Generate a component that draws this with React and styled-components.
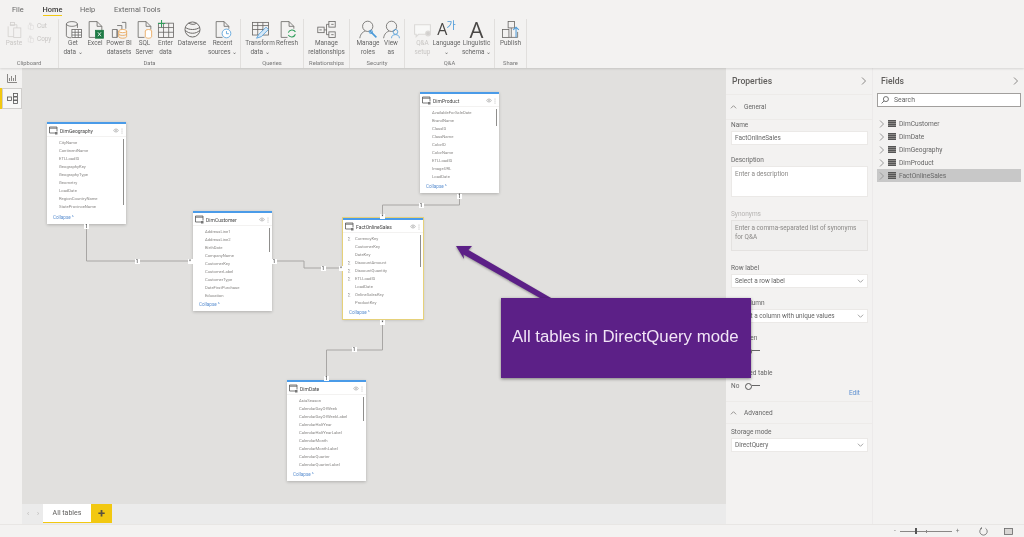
import React from "react";
import styled, { createGlobalStyle } from "styled-components";

const GlobalStyle = createGlobalStyle`
  html, body { margin: 0; padding: 0; background: #f3f2f1; overflow: hidden; }
  * { box-sizing: border-box; }
`;

const GREY = "#666462";
const BLUE = "#4b9ad8";
const ORANGE = "#e8a04c";

const icons = {
  paste: (
    <g stroke="#d2d0ce" fill="none">
      <path d="M6 6h9v4M4 8v13h7" /><rect x="11" y="10" width="9" height="12" /><rect x="7" y="3" width="5" height="4" />
    </g>
  ),
  getData: (
    <g stroke={GREY} fill="none">
      <ellipse cx="10" cy="5" rx="7" ry="3" /><path d="M3 5v15c0 1.500 3 2.500 6 2.500M17 5v5" />
      <rect x="10" y="12" width="12" height="10" fill="#fff" /><path d="M10 15.500h12M10 19h12M14 12v10M18 12v10" />
    </g>
  ),
  excel: (
    <g fill="none" stroke={GREY}>
      <path d="M4 2h10l6 6v6M4 2v20h8M14 2v6h6" />
      <rect x="12" y="13" width="10" height="10" fill="#1e7a45" stroke="#1e7a45" />
      <path d="M15 15.500l4 5M19 15.500l-4 5" stroke="#fff" />
    </g>
  ),
  dataset: (
    <g fill="none" stroke={GREY}>
      <path d="M3 12h6v10H3zM9 7h6v5M15 3h5v8" />
      <path d="M9 12v10" />
      <ellipse cx="16" cy="14" rx="5" ry="2" stroke={ORANGE} fill="#fff" />
      <path d="M11 14v7c0 1 2 2 5 2s5-1 5-2v-7M11 17.500c0 1 2 2 5 2s5-1 5-2" stroke={ORANGE} />
    </g>
  ),
  sql: (
    <g fill="none" stroke={GREY}>
      <path d="M4 2h10l6 6v4M4 2v20h8M14 2v6h6" />
      <ellipse cx="17" cy="14" rx="4" ry="2" stroke={ORANGE} fill="#fff" />
      <path d="M13 14v7c0 1 2 2 4 2s4-1 4-2v-7" stroke={ORANGE} fill="#fff" />
    </g>
  ),
  enter: (
    <g fill="none" stroke={GREY}>
      <rect x="3" y="4" width="19" height="18" /><path d="M3 9.500h19M3 15.500h19M9.500 4v18M16 4v18" />
      <path d="M7 0v9M2.500 4.500h9" stroke="#2f9e5b" strokeWidth="1.300" />
    </g>
  ),
  dataverse: (
    <g fill="none" stroke={GREY} strokeWidth="1.200">
      <circle cx="12" cy="12" r="9.500" /><path d="M3 9c3 4 15 4 18 0M3 13c4 5 14 5 18 0M7 4c4 2 8 2 10 0" />
    </g>
  ),
  recent: (
    <g fill="none" stroke={GREY}>
      <path d="M4 2h10l6 6v3M4 2v20h8M14 2v6h6" />
      <circle cx="17" cy="17" r="5.500" stroke={BLUE} fill="#fff" /><path d="M17 14v3.300h3" stroke={BLUE} />
    </g>
  ),
  transform: (
    <g fill="none" stroke={GREY}>
      <rect x="2" y="3" width="20" height="16" /><path d="M2 7h20M2 12h20M8.500 3v16M15 3v16" />
      <path d="M7 23l3-5 9-9 3 3-9 9z" stroke={BLUE} fill="#d5e8f7" />
    </g>
  ),
  refresh: (
    <g fill="none" stroke={GREY}>
      <path d="M4 2h10l6 6v3M4 2v20h8M14 2v6h6" />
      <path d="M13 16a5 5 0 0 1 9-1M22 18a5 5 0 0 1-9 1" stroke="#2f9e5b" strokeWidth="1.300" />
    </g>
  ),
  relationships: (
    <g fill="none" stroke={GREY}>
      <rect x="1" y="9" width="8" height="7" /><rect x="15" y="2" width="8" height="7" /><rect x="15" y="15" width="8" height="7" />
      <path d="M9 12.500h3M12 5.500v13M12 5.500h3M12 18.500h3M3 12.500h3M18 5.500h3M18 18.500h3" />
    </g>
  ),
  roles: (
    <g fill="none" stroke={GREY}>
      <circle cx="11" cy="8" r="6.500" /><path d="M1 23c1-6 4-8 7-9" />
      <path d="M14 14l8 8" stroke={BLUE} strokeWidth="2" /><circle cx="15" cy="15" r="2.200" stroke={BLUE} />
    </g>
  ),
  viewAs: (
    <g fill="none" stroke={GREY}>
      <circle cx="12" cy="8" r="6.500" /><path d="M2 23c1-6 4-8 7-9" />
      <circle cx="17" cy="15" r="3" stroke={BLUE} /><path d="M12 23c0-3 2-4.500 5-4.500s5 1.500 5 4.500" stroke={BLUE} />
    </g>
  ),
  qna: (
    <g fill="none" stroke="#dcdad8" strokeWidth="1.400">
      <path d="M2 6h20v12H7l-3 3v-3H2z" fill="#f8f8f7" /><circle cx="19" cy="17" r="3" fill="#d2d0ce" />
    </g>
  ),
  publish: (
    <g fill="none" stroke={GREY}>
      <rect x="9" y="2" width="8" height="8" /><rect x="2" y="12" width="8" height="10" /><path d="M10 22h11v-7M13 10v12" />
      <path d="M19 22V9M15.500 12.500L19 9l3.500 3.500" stroke={BLUE} strokeWidth="1.300" />
    </g>
  ),
};

const Svg = ({ name, size = 19 }) => (
  <svg width={size} height={size} viewBox="0 0 24 24" strokeWidth="1">
    {icons[name]}
  </svg>
);

const Page = styled.div`
  position: relative;
  width: 1024px;
  height: 537px;
  display: flex;
  flex-direction: column;
  overflow: hidden;
  background: #f3f2f1;
  font-family: Roboto, "Liberation Sans", sans-serif;
  color: #605e5c;
  filter: blur(0.45px);
`;

const Ribbon = styled.header`
  height: 68px;
  flex: none;
  position: relative;
  z-index: 2;
  background: #f3f2f1;
  box-shadow: 0 1px 2px rgba(0, 0, 0, 0.12);
`;

const RibbonTabs = styled.nav`
  height: 19px;
  display: flex;
  align-items: center;
  padding-left: 12px;
  font-size: 7.400px;
`;

const RibbonTab = styled.span`
  margin-right: ${(p) => p.$gap}px;
  padding: 2px 0 1px;
  color: ${(p) => (p.$active ? "#3b3a39" : "#666")};
  font-weight: ${(p) => (p.$active ? 500 : 400)};
  border-bottom: 1px solid ${(p) => (p.$active ? "#f2c811" : "transparent")};
`;

const Groups = styled.div`
  display: flex;
  height: 49px;
`;

const Group = styled.section`
  width: ${(p) => p.$w}px;
  flex: none;
  display: flex;
  flex-direction: column;
  border-right: 1px solid #e1dfdd;
`;

const GroupButtons = styled.div`
  flex: 1;
  display: flex;
  padding-left: ${(p) => p.$pad || 0}px;
`;

const GroupLabel = styled.div`
  height: 9px;
  line-height: 9px;
  text-align: center;
  font-size: 5.800px;
  color: #777;
`;

const Tool = styled.div`
  width: ${(p) => p.$w}px;
  flex: none;
  display: flex;
  flex-direction: column;
  align-items: center;
  font-size: 6.400px;
  line-height: 8.600px;
  text-align: center;
  white-space: nowrap;
  color: ${(p) => (p.$off ? "#c8c6c4" : "#666")};
`;

const ToolIcon = styled.div`
  height: 20px;
  display: flex;
  align-items: center;
  justify-content: center;
`;

const BigLetter = styled.span`
  font-size: ${(p) => p.$size}px;
  line-height: 20px;
  color: #4a4846;
  font-family: "Open Sans", sans-serif;
`;

const Hangul = styled.span`
  font-size: 10px;
  line-height: 14px;
  color: ${BLUE};
  margin: -8px 0 0 -1px;
  font-family: "Noto Sans CJK KR", sans-serif;
`;

const SmallTools = styled.div`
  display: flex;
  flex-direction: column;
  gap: 5px;
  padding: 3px 0 0 0;
  font-size: 6.400px;
  color: #c8c6c4;
`;

const SmallTool = styled.span`
  display: flex;
  align-items: center;
  gap: 2px;
`;

const Main = styled.div`
  flex: 1;
  display: flex;
  min-height: 0;
`;

const Rail = styled.aside`
  width: 22px;
  flex: none;
  display: flex;
  flex-direction: column;
  background: #f3f2f1;
`;

const RailItem = styled.div`
  height: ${(p) => (p.$active ? 21 : 20)}px;
  display: flex;
  align-items: center;
  justify-content: center;
  border-left: 2px solid ${(p) => (p.$active ? "#f2c811" : "transparent")};
  background: ${(p) => (p.$active ? "#f8f8f7" : "transparent")};
  box-shadow: ${(p) => (p.$active ? "inset 0 0 0 1px #d0cecc" : "none")};
`;

const Center = styled.div`
  width: 704px;
  flex: none;
  display: flex;
  flex-direction: column;
`;

const Canvas = styled.main`
  position: relative;
  flex: 1;
  background: #e1e0de;
`;

const Lines = styled.svg`
  position: absolute;
  inset: 0;
  width: 100%;
  height: 100%;
`;

const Marker = styled.span`
  position: absolute;
  left: ${(p) => p.$x - 2.5}px;
  top: ${(p) => p.$y - 2.5}px;
  width: 5px;
  height: 5px;
  background: #fff;
  font-size: 4.500px;
  line-height: 5px;
  text-align: center;
  color: #333;
  font-weight: 500;
`;

const Card = styled.article`
  position: absolute;
  left: ${(p) => p.$x}px;
  top: ${(p) => p.$y}px;
  width: ${(p) => (p.$selected ? 80 : 79)}px;
  height: ${(p) => p.$h}px;
  background: #fff;
  border-top: 2px solid #4a9be8;
  box-shadow: ${(p) =>
    p.$selected ? "0 0 0 1px #e6d17a, 0 1px 3px rgba(0,0,0,.2)" : "0 1px 3px rgba(0,0,0,.22)"};
  display: flex;
  flex-direction: column;
`;

const CardHead = styled.div`
  height: 12px;
  flex: none;
  display: flex;
  align-items: center;
  padding: 1px 3px 0 2px;
  gap: 2px;
  font-size: 5px;
  color: #444;
  box-shadow: 0 1px 0 #f3f2f1;
`;

const CardName = styled.span`
  flex: 1;
  white-space: nowrap;
`;

const FieldList = styled.div`
  position: relative;
  flex: 1;
  padding: 3px 0 0 12px;
  overflow: hidden;
`;

const Field = styled.div`
  position: relative;
  height: 8.050px;
  line-height: 8px;
  font-size: 4.200px;
  color: #8a8886;
  white-space: nowrap;
`;

const Sigma = styled.span`
  position: absolute;
  left: -7px;
  top: 0;
  color: #777;
`;

const Thumb = styled.div`
  position: absolute;
  right: 2px;
  top: 3px;
  width: 1.500px;
  height: ${(p) => p.$h}px;
  background: #8f8e8c;
`;

const Collapse = styled.div`
  height: 11px;
  flex: none;
  padding-left: 6px;
  font-size: 4.600px;
  line-height: 10px;
  color: #5b8fd0;
`;

const TabBar = styled.div`
  height: 20px;
  flex: none;
  display: flex;
  background: #ebebeb;
  padding-left: 5px;
  color: #b5b3b1;
  font-size: 8px;
`;

const TabArrows = styled.div`
  width: 16px;
  display: flex;
  gap: 8px;
  align-items: center;
  font-size: 7px;
`;

const PageTab = styled.div`
  width: 48px;
  height: 19px;
  display: flex;
  align-items: center;
  justify-content: center;
  background: #fff;
  color: #5f5e5c;
  font-size: 7px;
  border-bottom: 1px solid #f2c811;
`;

const AddTab = styled.div`
  width: 21px;
  height: 19px;
  display: flex;
  align-items: center;
  justify-content: center;
  background: #f2c811;
  color: #5a5340;
  font-size: 13px;
  font-weight: 700;
`;

const Properties = styled.aside`
  width: 147px;
  flex: none;
  border-right: 1px solid #eceaea;
  background: #f3f2f1;
`;

const PanelHead = styled.div`
  height: 26px;
  display: flex;
  align-items: center;
  justify-content: space-between;
  padding: 0 5px 0 ${(p) => p.$pad}px;
  font-size: 8.600px;
  font-weight: 500;
  color: #605e5c;
`;

const Chevron = styled.svg`
  width: 7px;
  height: 8px;
  fill: none;
  stroke: ${(p) => p.$color || "#8a8886"};
  flex: none;
`;

const Section = styled.div`
  height: ${(p) => p.$h}px;
  display: flex;
  align-items: center;
  gap: 7px;
  padding-left: 4px;
  font-size: 6.500px;
  border-top: 1px solid #edebe9;
  border-bottom: 1px solid #edebe9;
  color: #666;
`;

const PropBody = styled.div`
  padding: 0 4px 0 5px;
`;

const Label = styled.div`
  font-size: 6.500px;
  line-height: 9px;
  margin: ${(p) => p.$top + 1}px 0 1px;
  color: ${(p) => (p.$off ? "#b5b3b1" : "#666")};
`;

const Input = styled.div`
  height: ${(p) => p.$h || 14}px;
  padding: ${(p) => (p.$h ? "3px 3px" : "0 3px")};
  display: flex;
  align-items: ${(p) => (p.$h ? "flex-start" : "center")};
  justify-content: space-between;
  background: ${(p) => (p.$off ? "#f0efee" : "#fff")};
  border: 1px solid ${(p) => (p.$off ? "#e4e2e0" : "#ebe9e7")};
  font-size: 6.400px;
  line-height: 9px;
  color: ${(p) => (p.$muted ? "#8a8886" : "#666")};
`;

const Switch = styled.div`
  display: flex;
  align-items: center;
  gap: 6px;
  height: 9px;
  margin-top: 3.500px;
  font-size: 6.500px;
  color: #666;
`;

const Knob = styled.span`
  width: 7px;
  height: 7px;
  border-radius: 50%;
  border: 1.500px solid #555;
  position: relative;
  &::after {
    content: "";
    position: absolute;
    left: 5.500px;
    top: 1.300px;
    width: 8px;
    height: 1px;
    background: #666;
  }
`;

const EditLink = styled.div`
  text-align: right;
  padding-right: 8px;
  margin-top: -2px;
  height: 12.500px;
  line-height: 9px;
  font-size: 6.500px;
  color: #5b8fd0;
`;

const Fields = styled.aside`
  width: 151px;
  flex: none;
  background: #f3f2f1;
`;

const SearchBox = styled.div`
  margin: -1px 3px 0 4px;
  height: 14px;
  display: flex;
  align-items: center;
  gap: 5px;
  padding-left: 3px;
  background: #fff;
  border: 1px solid #a19f9d;
  font-size: 6.800px;
  color: #666;
`;

const TableList = styled.div`
  margin: 10px 3px 0 4px;
`;

const TableRow = styled.div`
  height: 13px;
  display: flex;
  align-items: center;
  gap: 3px;
  padding-left: 1px;
  font-size: 6.600px;
  color: #666;
  background: ${(p) => (p.$selected ? "#c8c8c8" : "transparent")};
`;

const GridGlyph = styled.span`
  width: 8px;
  height: 7px;
  background: repeating-linear-gradient(180deg, #555 0 1px, #8a8886 1px 2px);
  flex: none;
`;

const StatusBar = styled.footer`
  height: 13px;
  flex: none;
  display: flex;
  align-items: center;
  padding-left: 894px;
  border-top: 1px solid #e8e6e4;
  background: #f3f2f1;
  color: #777;
  font-size: 6.500px;
`;

const Zoom = styled.div`
  position: relative;
  width: 52px;
  height: 1px;
  margin: 0 4px;
  background: #8a8886;
  &::before {
    content: "";
    position: absolute;
    left: 15px;
    top: -2.500px;
    width: 2px;
    height: 6px;
    background: #555;
  }
  &::after {
    content: "";
    position: absolute;
    left: 26px;
    top: -1px;
    width: 1px;
    height: 3px;
    background: #8a8886;
  }
`;

const StatusIcons = styled.div`
  display: flex;
  gap: 16px;
  align-items: center;
  margin-left: 19px;
`;

const Callout = styled.div`
  position: absolute;
  left: 501px;
  top: 298px;
  width: 250px;
  height: 80px;
  z-index: 3;
  display: flex;
  align-items: center;
  padding: 0 0 2px 11px;
  background: #5c2087;
  box-shadow: 0 1px 3px rgba(0, 0, 0, 0.45);
  font-family: "Liberation Sans", Arial, sans-serif;
  font-size: 16.800px;
  color: #f1e4f6;
  white-space: nowrap;
`;

const Arrow = styled.svg`
  position: absolute;
  left: 450px;
  top: 240px;
  width: 125px;
  height: 65px;
  z-index: 3;
  filter: drop-shadow(0 1px 1px rgba(0, 0, 0, 0.35));
`;

const ChevronRight = ({ color }) => (
  <Chevron viewBox="0 0 7 8" $color={color}><path d="M2 .5L5.500 4 2 7.500" /></Chevron>
);
const ChevronDown = () => (
  <Chevron viewBox="0 0 8 8" $color="#999"><path d="M1 2.500l3 3 3-3" /></Chevron>
);
const ChevronUp = () => (
  <Chevron viewBox="0 0 8 8"><path d="M1 5.500l3-3 3 3" /></Chevron>
);

const TableGlyph = () => (
  <svg width="9" height="9" viewBox="0 0 9 9" fill="none" stroke="#555" strokeWidth=".8">
    <path d="M6 7H.5V1h7.500v4.500" /><path d="M.5 2.200H8" /><rect x="6" y="6" width="2.500" height="2.500" fill="#777" stroke="none" />
  </svg>
);

const Eye = () => (
  <svg width="6" height="5" viewBox="0 0 6 5" fill="none" stroke="#aaa" strokeWidth=".7">
    <path d="M.3 2.500C2 .5 4 .5 5.700 2.500 4 4.500 2 4.500.3 2.500z" /><circle cx="3" cy="2.500" r=".8" />
  </svg>
);

const Dots = () => (
  <svg width="2" height="6" viewBox="0 0 2 6" fill="#aaa">
    <circle cx="1" cy="1" r=".5" /><circle cx="1" cy="3" r=".5" /><circle cx="1" cy="5" r=".5" />
  </svg>
);

// canvas coordinates: the diagram is a free canvas, x-22 / y-68 from the page
const tables = [
  { name: "DimGeography", x: 25, y: 54, h: 102, thumb: 66,
    fields: ["CityName", "ContinentName", "ETLLoadID", "GeographyKey", "GeographyType", "Geometry", "LoadDate", "RegionCountryName", "StateProvinceName"] },
  { name: "DimCustomer", x: 171, y: 143, h: 100, thumb: 24,
    fields: ["AddressLine1", "AddressLine2", "BirthDate", "CompanyName", "CustomerKey", "CustomerLabel", "CustomerType", "DateFirstPurchase", "Education"] },
  { name: "DimProduct", x: 398, y: 24, h: 101, thumb: 17,
    fields: ["AvailableForSaleDate", "BrandName", "ClassID", "ClassName", "ColorID", "ColorName", "ETLLoadID", "ImageURL", "LoadDate"] },
  { name: "FactOnlineSales", x: 321, y: 150, h: 101, thumb: 32, selected: true,
    fields: ["∑CurrencyKey", "CustomerKey", "DateKey", "∑DiscountAmount", "∑DiscountQuantity", "∑ETLLoadID", "LoadDate", "∑OnlineSalesKey", "ProductKey"] },
  { name: "DimDate", x: 265, y: 312, h: 101, thumb: 24,
    fields: ["AsiaSeason", "CalendarDayOfWeek", "CalendarDayOfWeekLabel", "CalendarHalfYear", "CalendarHalfYearLabel", "CalendarMonth", "CalendarMonthLabel", "CalendarQuarter", "CalendarQuarterLabel"] },
];

const lines = [
  "M64.500 156V193H171",
  "M250 193H282V200H321",
  "M437.500 125V137H360.500V150",
  "M360.500 252V282H304.500V312",
];

const markers = [
  [64.5, 158, "1"], [115, 193, "1"], [168, 193, "*"], [252, 193, "1"], [301, 200, "1"], [319, 200, "*"],
  [437.5, 128, "1"], [399, 137, "1"], [360.5, 148, "*"], [360.5, 254, "*"], [332, 281, "1"], [304.5, 310, "1"],
];

const App = () => (
  <Page>
    <GlobalStyle />
    <Ribbon>
      <RibbonTabs>
        <RibbonTab $gap={19}>File</RibbonTab>
        <RibbonTab $gap={17.5} $active>Home</RibbonTab>
        <RibbonTab $gap={19}>Help</RibbonTab>
        <RibbonTab $gap={0}>External Tools</RibbonTab>
      </RibbonTabs>
      <Groups>
        <Group $w={59}>
          <GroupButtons $pad={1}>
            <Tool $w={26} $off><ToolIcon><Svg name="paste" /></ToolIcon>Paste</Tool>
            <SmallTools>
              <SmallTool><Svg name="paste" size={8} />Cut</SmallTool>
              <SmallTool><Svg name="paste" size={8} />Copy</SmallTool>
            </SmallTools>
          </GroupButtons>
          <GroupLabel>Clipboard</GroupLabel>
        </Group>
        <Group $w={182}>
          <GroupButtons $pad={2}>
            <Tool $w={24}><ToolIcon><Svg name="getData" /></ToolIcon>Get<br />data ⌄</Tool>
            <Tool $w={20}><ToolIcon><Svg name="excel" /></ToolIcon>Excel</Tool>
            <Tool $w={28}><ToolIcon><Svg name="dataset" /></ToolIcon>Power BI<br />datasets</Tool>
            <Tool $w={23}><ToolIcon><Svg name="sql" /></ToolIcon>SQL<br />Server</Tool>
            <Tool $w={19}><ToolIcon><Svg name="enter" /></ToolIcon>Enter<br />data</Tool>
            <Tool $w={34}><ToolIcon><Svg name="dataverse" /></ToolIcon>Dataverse</Tool>
            <Tool $w={27}><ToolIcon><Svg name="recent" /></ToolIcon>Recent<br />sources ⌄</Tool>
          </GroupButtons>
          <GroupLabel>Data</GroupLabel>
        </Group>
        <Group $w={63}>
          <GroupButtons $pad={4}>
            <Tool $w={30}><ToolIcon><Svg name="transform" /></ToolIcon>Transform<br />data ⌄</Tool>
            <Tool $w={24}><ToolIcon><Svg name="refresh" /></ToolIcon>Refresh</Tool>
          </GroupButtons>
          <GroupLabel>Queries</GroupLabel>
        </Group>
        <Group $w={46}>
          <GroupButtons>
            <Tool $w={45}><ToolIcon><Svg name="relationships" /></ToolIcon>Manage<br />relationships</Tool>
          </GroupButtons>
          <GroupLabel>Relationships</GroupLabel>
        </Group>
        <Group $w={55}>
          <GroupButtons $pad={6}>
            <Tool $w={24}><ToolIcon><Svg name="roles" /></ToolIcon>Manage<br />roles</Tool>
            <Tool $w={22}><ToolIcon><Svg name="viewAs" /></ToolIcon>View<br />as</Tool>
          </GroupButtons>
          <GroupLabel>Security</GroupLabel>
        </Group>
        <Group $w={90}>
          <GroupButtons $pad={6}>
            <Tool $w={23} $off><ToolIcon><Svg name="qna" /></ToolIcon>Q&amp;A<br />setup</Tool>
            <Tool $w={25}><ToolIcon><BigLetter $size={16}>A</BigLetter><Hangul>가</Hangul></ToolIcon>Language<br />⌄</Tool>
            <Tool $w={35}><ToolIcon><BigLetter $size={22}>A</BigLetter></ToolIcon>Linguistic<br />schema ⌄</Tool>
          </GroupButtons>
          <GroupLabel>Q&amp;A</GroupLabel>
        </Group>
        <Group $w={32}>
          <GroupButtons>
            <Tool $w={31}><ToolIcon><Svg name="publish" /></ToolIcon>Publish</Tool>
          </GroupButtons>
          <GroupLabel>Share</GroupLabel>
        </Group>
      </Groups>
    </Ribbon>
    <Main>
      <Rail>
        <RailItem>
          <svg width="10" height="10" viewBox="0 0 10 10" fill="none" stroke="#8a8886">
            <path d="M.5 1v8.500H10M2.500 8V5M4.500 8V3M6.500 8V5M8.500 8V2" />
          </svg>
        </RailItem>
        <RailItem $active>
          <svg width="11" height="11" viewBox="0 0 11 11" fill="none" stroke="#555" strokeWidth=".8">
            <rect x=".5" y="4" width="4" height="3.500" /><rect x="6.500" y=".5" width="4" height="3" /><rect x="6.500" y="4" width="4" height="3" /><rect x="6.500" y="7.500" width="4" height="3" />
          </svg>
        </RailItem>
      </Rail>
      <Center>
        <Canvas>
          <Lines>
            {lines.map((d) => (
              <path key={d} d={d} fill="none" stroke="#a8a6a4" strokeWidth="1" />
            ))}
          </Lines>
          {tables.map((t) => (
            <Card key={t.name} $x={t.x} $y={t.y} $h={t.h} $selected={t.selected}>
              <CardHead>
                <TableGlyph />
                <CardName>{t.name}</CardName>
                <Eye />
                <Dots />
              </CardHead>
              <FieldList>
                {t.fields.map((f) => (
                  <Field key={f}>
                    {f[0] === "∑" && <Sigma>∑</Sigma>}
                    {f.replace("∑", "")}
                  </Field>
                ))}
                <Thumb $h={t.thumb} />
              </FieldList>
              <Collapse>Collapse ^</Collapse>
            </Card>
          ))}
          {markers.map(([x, y, c], i) => (
            <Marker key={i} $x={x} $y={y}>{c}</Marker>
          ))}
        </Canvas>
        <TabBar>
          <TabArrows><span>‹</span><span>›</span></TabArrows>
          <PageTab>All tables</PageTab>
          <AddTab>+</AddTab>
        </TabBar>
      </Center>
      <Properties>
        <PanelHead $pad={6}>Properties<ChevronRight /></PanelHead>
        <Section $h={26}><ChevronUp />General</Section>
        <PropBody>
          <Label $top={0}>Name</Label>
          <Input>FactOnlineSales</Input>
          <Label $top={10}>Description</Label>
          <Input $h={31} $muted>Enter a description</Input>
          <Label $top={12} $off>Synonyms</Label>
          <Input $h={31} $off $muted>Enter a comma-separated list of synonyms for Q&amp;A</Input>
          <Label $top={12}>Row label</Label>
          <Input>Select a row label<ChevronDown /></Input>
          <Label $top={10}>Key column</Label>
          <Input>Select a column with unique values<ChevronDown /></Input>
          <Label $top={10}>Is hidden</Label>
          <Switch>No<Knob /></Switch>
          <Label $top={12.5}>Featured table</Label>
          <Switch>No<Knob /></Switch>
          <EditLink>Edit</EditLink>
        </PropBody>
        <Section $h={23}><ChevronUp />Advanced</Section>
        <PropBody>
          <Label $top={3}>Storage mode</Label>
          <Input>DirectQuery<ChevronDown /></Input>
        </PropBody>
      </Properties>
      <Fields>
        <PanelHead $pad={8}>Fields<ChevronRight /></PanelHead>
        <SearchBox>
          <svg width="8" height="8" viewBox="0 0 7 7" fill="none" stroke="#666" strokeWidth=".8">
            <circle cx="4.300" cy="2.700" r="2.200" /><path d="M2.700 4.300L.5 6.500" />
          </svg>
          Search
        </SearchBox>
        <TableList>
          {["DimCustomer", "DimDate", "DimGeography", "DimProduct", "FactOnlineSales"].map((n) => (
            <TableRow key={n} $selected={n === "FactOnlineSales"}>
              <ChevronRight color="#999" />
              <GridGlyph />
              {n}
            </TableRow>
          ))}
        </TableList>
      </Fields>
    </Main>
    <StatusBar>
      -<Zoom />+
      <StatusIcons>
        <svg width="9" height="9" viewBox="0 0 9 9" fill="none" stroke="#666" strokeWidth=".8">
          <path d="M2.500 1.300a3.700 3.700 0 1 0 4 0M2.500 .3v1.500H1" />
        </svg>
        <svg width="9" height="7" viewBox="0 0 9 7" fill="#d8d6d4" stroke="#666" strokeWidth=".8">
          <rect x=".5" y=".5" width="8" height="6" />
        </svg>
      </StatusIcons>
    </StatusBar>
    <Arrow viewBox="0 0 125 65">
      <path d="M6 6L22 6 18.500 10 108 62 97 62 13.500 14.500 14 19z" fill="#5c2087" />
    </Arrow>
    <Callout>All tables in DirectQuery mode</Callout>
  </Page>
);

export default App;
